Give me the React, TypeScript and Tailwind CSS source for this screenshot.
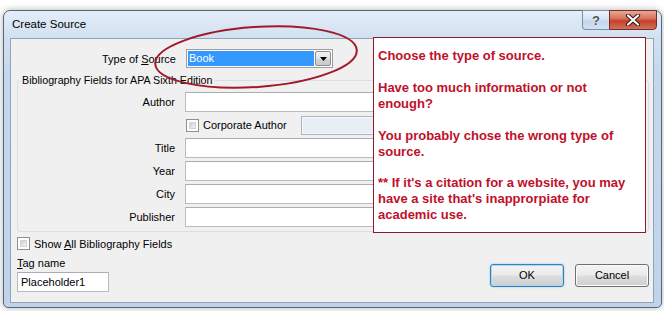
import clsx from 'clsx';

const inputBase =
  'h-[20px] border border-[#b7bcc4] border-t-[#abadb3] bg-white text-[11px] leading-[18px] px-[3px]';

function Checkbox() {
  return (
    <div className="w-[13px] h-[13px] shrink-0 border border-[#8e8f8f] bg-white p-[2px]">
      <div className="w-full h-full bg-[linear-gradient(135deg,#cbcfd5,#f4f4f4)] border border-[#d2d4d8]" />
    </div>
  );
}

function FieldRow({ label, children }: { label: string; children?: React.ReactNode }) {
  return (
    <div className="flex items-center h-[20px]">
      <span className="w-[157px] text-right text-[11px] leading-[14px]">{label}</span>
      <div className="ml-[10px] flex-1 flex">
        {children ?? <div className={clsx(inputBase, 'flex-1')} />}
      </div>
    </div>
  );
}

function DialogButton({ label, primary }: { label: string; primary?: boolean }) {
  return (
    <button
      className={clsx(
        'h-[23px] w-[74px] rounded-[3px] border text-[11px] leading-none text-black',
        'bg-[linear-gradient(to_bottom,#f3f3f3_0%,#ebebeb_48%,#dddddd_52%,#cfcfcf_100%)]',
        primary
          ? 'border-[#3c7fb1] shadow-[inset_0_0_0_1px_#a7d9f5,0_0_2px_#7ec4ec]'
          : 'border-[#707070] shadow-[inset_0_0_0_1px_#fbfbfb]',
      )}
    >
      {label}
    </button>
  );
}

function TitleButtons() {
  return (
    <div className="ml-auto mr-[4px] -mt-px flex">
      <div className="w-[27px] h-[20px] rounded-bl-[4px] border border-[#7d8fa5] border-r-0 bg-[linear-gradient(to_bottom,#eef4fb_0%,#d7e4f2_45%,#c3d5ea_55%,#d2e2f3_100%)] flex items-center justify-center">
        <span className="text-[13px] leading-none font-bold text-[#4b5563] [text-shadow:0_0_2px_#fff]">?</span>
      </div>
      <div className="w-[48px] h-[20px] rounded-br-[4px] border border-[#7a2a20] bg-[linear-gradient(to_bottom,#e8a896_0%,#d6725c_42%,#c4412b_55%,#d2715a_100%)] flex items-center justify-center">
        <svg width="16" height="12" viewBox="0 0 16 12">
          <path d="M3 1.5 L13 10.5 M13 1.5 L3 10.5" stroke="#3b1712" strokeWidth="4.2" strokeLinecap="round" />
          <path d="M3 1.5 L13 10.5 M13 1.5 L3 10.5" stroke="#ffffff" strokeWidth="2.2" strokeLinecap="round" />
        </svg>
      </div>
    </div>
  );
}

function Callout() {
  return (
    <div className="absolute left-[369px] top-[26px] w-[273px] h-[196px] border border-[#8b1a2a] bg-white pl-[4px] pt-[10px] font-['Liberation_Sans',Arial,sans-serif] font-bold text-[13px] leading-[16px] text-[#c0102a]">
      <p>Choose the type of source.</p>
      <p className="mt-[16px]">
        Have too much information or not
        <br />
        enough?
      </p>
      <p className="mt-[16px]">
        You probably chose the wrong type of
        <br />
        source.
      </p>
      <p className="mt-[15px]">
        ** If it&apos;s a citation for a website, you may
        <br />
        have a site that&apos;s inapprorpiate for
        <br />
        academic use.
      </p>
    </div>
  );
}

export default function App() {
  return (
    <div className="w-[664px] h-[311px] overflow-hidden bg-white pt-[10px] pl-[3px] font-['Liberation_Sans',Arial,sans-serif] text-black">
      <div className="relative w-[659px] h-[298px] rounded-t-[7px] rounded-b-[5px] border border-[#56657a] bg-[linear-gradient(to_bottom,#e3edf8_0px,#d2e1f1_26px,#c4d8ed_60px,#bfd4eb_100%)] shadow-[0_0_7px_rgba(0,0,0,0.3)] flex flex-col">
        {/* title bar */}
        <div className="h-[27px] flex items-start pl-[8px]">
          <span className="mt-[6px] text-[11.5px] leading-[14px]">Create Source</span>
          <TitleButtons />
        </div>

        {/* client area */}
        <div className="ml-[6px] w-[644px] h-[265px] border border-[#8fa3b9] bg-[#f0f0f0] flex flex-col pl-[6px] pr-[4px]">
          <div className="mt-[10px] flex items-center h-[19px]">
            <span className="w-[159px] text-right text-[11px] leading-[14px]">
              Type of <u>S</u>ource
            </span>
            <div className="ml-[10px] w-[147px] h-[19px] border border-[#9a9da3] bg-white p-px flex">
              <div className="flex-1 bg-[#3399ff] text-white text-[11px] leading-[15px] pl-[1px]">Book</div>
              <div className="w-[16px] ml-px border border-[#8d8d8d] rounded-[2px] bg-[linear-gradient(to_bottom,#f2f2f2,#e4e4e4_50%,#d4d4d4_51%,#c9c9c9)] flex items-center justify-center">
                <svg width="7" height="4" viewBox="0 0 7 4">
                  <path d="M0 0 H7 L3.5 4 Z" fill="#000" />
                </svg>
              </div>
            </div>
          </div>

          <fieldset className="mt-[5px] border border-[#d5dfe5] rounded-[3px] pb-[4px] pr-[2px]">
            <legend className="ml-[2px] px-[2px] text-[10.7px] leading-[14px]">
              Bibliography Fields for APA Sixth Edition
            </legend>
            <div className="mt-[5px] flex flex-col gap-[3px]">
              <FieldRow label="Author" />
              <div className="flex items-center h-[20px] pl-[168px]">
                <Checkbox />
                <span className="ml-[4px] text-[11px] leading-[14px]">Corporate Author</span>
                <div className="ml-[14px] flex-1 h-[19px] border border-[#a9b6c6] bg-[#e9eef5] shadow-[inset_0_0_0_1px_#f4f7fb]" />
              </div>
              <FieldRow label="Title" />
              <FieldRow label="Year" />
              <FieldRow label="City" />
              <FieldRow label="Publisher" />
            </div>
          </fieldset>

          <div className="flex items-end">
            <div className="flex flex-col">
              <div className="mt-[5px] flex items-center h-[13px]">
                <Checkbox />
                <span className="ml-[4px] text-[11px] leading-[14px]">
                  Show <u>A</u>ll Bibliography Fields
                </span>
              </div>
              <span className="mt-[6px] text-[11px] leading-[14px]">
                <u>T</u>ag name
              </span>
              <div className={clsx(inputBase, 'mt-[2px] w-[92px]')}>Placeholder1</div>
            </div>
            <div className="ml-auto mb-[5px] flex gap-[11px]">
              <DialogButton label="OK" primary />
              <DialogButton label="Cancel" />
            </div>
          </div>
        </div>

        <Callout />

        <svg
          className="absolute left-0 top-0 pointer-events-none overflow-visible"
          width="657"
          height="296"
        >
          <ellipse
            cx="252"
            cy="46"
            rx="101"
            ry="30"
            transform="rotate(-4 252 46)"
            fill="none"
            stroke="#a3182b"
            strokeWidth="2"
          />
        </svg>
      </div>
    </div>
  );
}
